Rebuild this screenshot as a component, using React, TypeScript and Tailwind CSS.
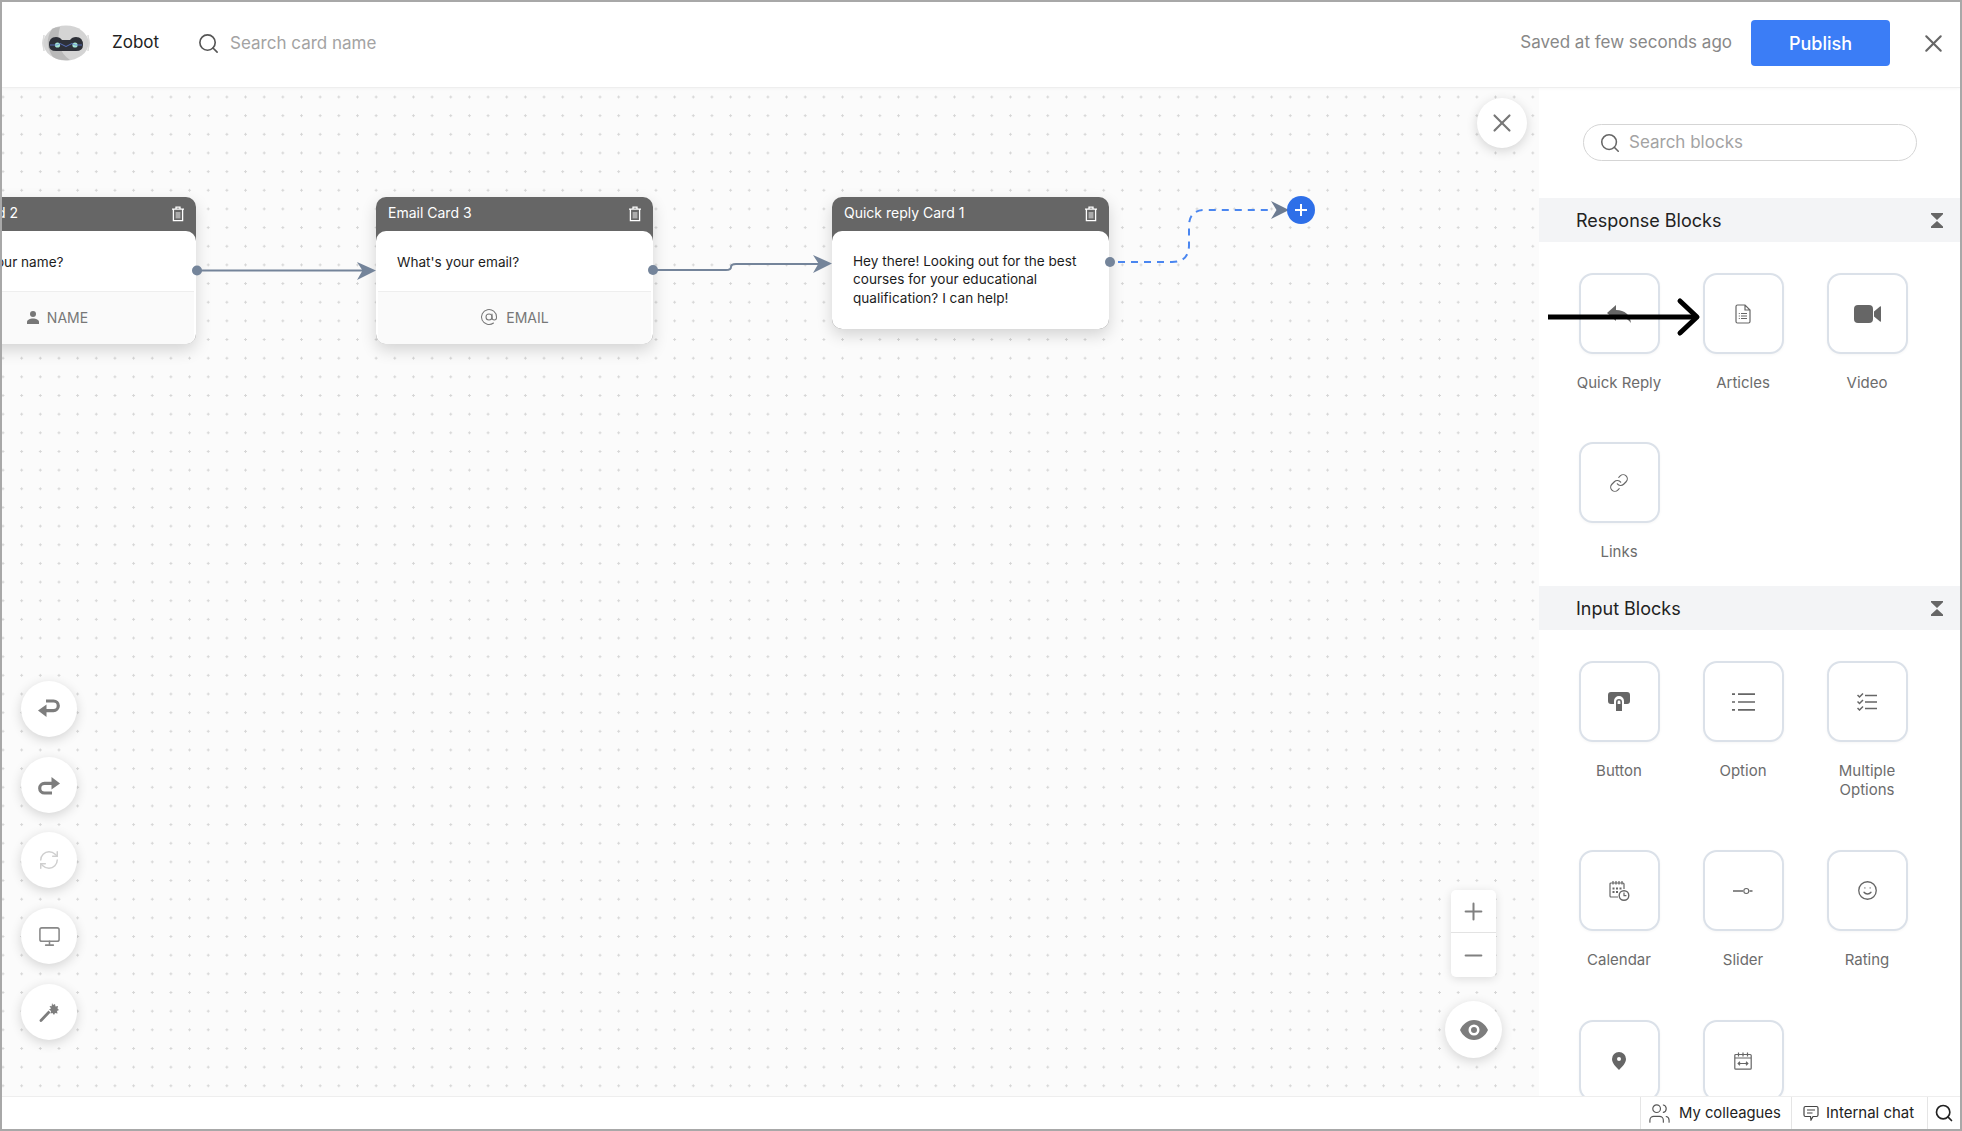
import React from "react";
import { AtSign, Link, Minus, Monitor, Plus, RefreshCw, Search, Smile, Users, X } from "lucide-react";

const font = "font-['Inter','Noto_Sans',sans-serif]";

const TrashIcon = ({ className = "" }: { className?: string }) => (
  <svg viewBox="0 0 14 16" className={className} fill="none" stroke="currentColor" strokeWidth="1.3">
    <path d="M1 3.2h12M5 3V1.2h4V3M2.4 3.4v11.2h9.2V3.4" />
    <rect x="4.6" y="6" width="4.8" height="6.4" fill="currentColor" fillOpacity="0.45" stroke="none" />
  </svg>
);

const CollapseIcon = () => (
  <svg viewBox="0 0 12 15" className="w-3 h-[15px] text-[#666]" fill="currentColor">
    <path d="M0 0h12v1.2L6 7 0 1.2zM6 8l6 5.6V15H0v-1.4z" />
  </svg>
);

const Logo = () => (
  <svg viewBox="0 0 52 36" className="w-[52px] h-9">
    <path d="M4 10 Q1 18 4 26 L4 10zM48 10 Q51 18 48 26 L48 10z" fill="#ddd" stroke="#ddd" />
    <ellipse cx="26" cy="18" rx="22.5" ry="17.5" fill="#d4d4d4" />
    <path d="M12 4 Q3 18 13 32 Q20 36 30 35 Q14 24 20 2 Q15 2 12 4z" fill="#b9b9b9" />
    <path d="M9 20 Q9 12 16 12 Q20 12 22 15 H30 Q32 12 36 12 Q43 12 43 20 Q43 26 36 26 H16 Q9 26 9 20z" fill="#2d3038" />
    <circle cx="17.5" cy="20" r="2.6" fill="#a6e6d2" />
    <circle cx="35" cy="20" r="2.6" fill="#a6e6d2" />
    <path d="M10 20 H17 Q20 17 23 20 T29 20 T35 20 H42" fill="none" stroke="#5f7ed8" strokeWidth="0.8" />
  </svg>
);

const NodeCard = ({ title, left, width, children }: { title: string; left: string; width: string; children: React.ReactNode }) => (
  <div className={`absolute top-[109px] ${left} ${width} rounded-[10px] bg-[#666666] shadow-[0_6px_16px_rgba(0,0,0,0.16)]`}>
    <div className="h-[34px] pb-[3px] flex items-center justify-between pl-3 pr-[11px] text-[14px] text-white">
      <span>{title}</span>
      <TrashIcon className="w-[14px] h-4 text-white mt-[3px]" />
    </div>
    <div className="rounded-[10px] bg-white overflow-hidden">{children}</div>
  </div>
);

const InputCardBody = ({ text, textClass, icon, label }: { text: string; textClass: string; icon: React.ReactNode; label: string }) => (
  <>
    <div className={`h-[60px] pt-[21px] text-[13.6px] leading-[20px] text-[#1c1c1c] ${textClass}`}>{text}</div>
    <div className="h-[53px] pb-[2px] mx-0.5 border-t border-[#eeeeee] bg-[#fafafa] flex items-center justify-center gap-2 text-[14px] text-[#777]">
      {icon}
      <span>{label}</span>
    </div>
  </>
);

const Tile = ({ label, icon }: { label?: string; icon: React.ReactNode }) => (
  <div className="flex flex-col items-center">
    <div className="w-[81px] h-[81px] shrink-0 rounded-[14px] border-2 border-[#dbe1e9] bg-white flex items-center justify-center text-[#666] shadow-[0_1px_3px_rgba(0,0,0,0.04)]">
      {icon}
    </div>
    {label && <div className="mt-[19px] text-center text-[15px] leading-[19px] text-[#6c6c6c] whitespace-pre">{label}</div>}
  </div>
);

const SectionHeader = ({ title }: { title: string }) => (
  <div className="h-11 shrink-0 bg-[#f3f4f6] flex items-center justify-between pl-[37px] pr-[17px] text-[18px] text-[#222]">
    <span>{title}</span>
    <CollapseIcon />
  </div>
);

const ToolButton = ({ children }: { children: React.ReactNode }) => (
  <div className="w-14 h-14 rounded-full bg-white shadow-[0_3px_12px_rgba(0,0,0,0.16)] flex items-center justify-center text-[#7d7d7d]">
    {children}
  </div>
);

const ArticleIcon = () => (
  <svg viewBox="0 0 16 20" className="w-4 h-5" fill="none" stroke="currentColor" strokeWidth="1.2">
    <path d="M1 2.5A1.5 1.5 0 0 1 2.5 1H10l5 5v11.5a1.5 1.5 0 0 1-1.5 1.5h-11A1.5 1.5 0 0 1 1 17.5zM10 1v5h5" />
    <path d="M6 9.5h6M6 12h6M6 14.5h6M3.8 9.5h1M3.8 12h1M3.8 14.5h1" />
  </svg>
);

const VideoIcon = () => (
  <svg viewBox="0 0 27 18" className="w-[27px] h-[18px]" fill="currentColor">
    <rect x="0" y="0" width="19" height="18" rx="4" />
    <path d="M20 6.5 26 1.5c.5-.4 1-.2 1 .5v14c0 .7-.5.9-1 .5l-6-5z" />
  </svg>
);

const ReplyIcon = () => (
  <svg viewBox="0 0 24 18" className="w-6 h-[18px]" fill="currentColor">
    <path d="M9 0 0 8l9 8v-5c6 0 11 2 15 7-1-8-6-13-15-13z" />
  </svg>
);

const ButtonIcon = () => (
  <svg viewBox="0 0 22 19" className="w-[22px] h-[19px]" fill="currentColor">
    <path d="M3 0h16a3 3 0 0 1 3 3v6a3 3 0 0 1-3 3h-3V9a5 5 0 0 0-10 0v3H3a3 3 0 0 1-3-3V3a3 3 0 0 1 3-3z" />
    <path d="M8 10a3 3 0 0 1 6 0v9H8zM11 8.500a1.400 1.400 0 0 0-1.400 1.400V12h2.800V9.900A1.400 1.400 0 0 0 11 8.500z" fillRule="evenodd" />
  </svg>
);

const OptionIcon = () => (
  <svg viewBox="0 0 23 18" className="w-[23px] h-[18px]" fill="none" stroke="currentColor" strokeWidth="1.7">
    <path d="M6 1.200h17M6 9h17M6 16.800h17" />
    <path d="M0 1.200h3M0 9h3M0 16.800h3" />
  </svg>
);

const MultiOptionIcon = () => (
  <svg viewBox="0 0 20 18" className="w-5 h-[18px]" fill="none" stroke="currentColor" strokeWidth="1.500">
    <path d="M8 2.500h12M8 9h12M8 15.500h12" />
    <path d="M0.500 2 2.500 4 6 0.500M0.500 8.500 2.500 10.500 6 7M0.500 15 2.500 17 6 13.500" />
  </svg>
);

const CalendarClockIcon = () => (
  <svg viewBox="0 0 21 20" className="w-[21px] h-5" fill="none" stroke="currentColor" strokeWidth="1.2">
    <path d="M9 16H2a1 1 0 0 1-1-1V3a1 1 0 0 1 1-1h12a1 1 0 0 1 1 1v5" />
    <path d="M4 0v3.500M7 0v3.500M10 0v3.500M13 0v3.500" />
    <path d="M3.500 6.500h2v2h-2zM7 6.500h2v2H7zM10.500 6.500h2v2h-2zM3.500 10h2v2h-2zM7 10h2v2H7z" fill="currentColor" stroke="none" />
    <circle cx="15" cy="14.500" r="4.800" fill="#fff" strokeWidth="1.400" />
    <path d="M15 11.500v3.200h2.400" />
  </svg>
);

const SliderIcon = () => (
  <svg viewBox="0 0 20 8" className="w-5 h-2" fill="none" stroke="currentColor" strokeWidth="1.100">
    <path d="M0 4h10M16.500 4h3" strokeWidth="1.400" />
    <circle cx="13.300" cy="4" r="2.500" />
  </svg>
);

const PinIcon = () => (
  <svg viewBox="0 0 14 18" className="w-[14px] h-[18px]" fill="currentColor">
    <path fillRule="evenodd" d="M7 0a7 7 0 0 1 7 7c0 4-4 8-7 11C4 15 0 11 0 7a7 7 0 0 1 7-7zm0 5a2 2 0 1 0 0 4 2 2 0 0 0 0-4z" />
  </svg>
);

const DateRangeIcon = () => (
  <svg viewBox="0 0 18 18" className="w-[18px] h-[18px]" fill="none" stroke="currentColor" strokeWidth="1.200">
    <rect x="0.800" y="2.500" width="16.400" height="14.700" rx="1" />
    <path d="M4.500 0.500v4M9 0.500v4M13.500 0.500v4M1 6h16M4.500 11.500h9" />
    <path d="M6 9.800 4.200 11.500 6 13.200M12 9.800l1.800 1.700-1.800 1.700" />
  </svg>
);

const UndoIcon = () => (
  <svg viewBox="0 0 22 20" className="w-[22px] h-5" fill="none" stroke="currentColor" strokeWidth="3.200">
    <path d="M8 2h7.500a4.800 4.800 0 0 1 0 9.600H7" />
    <path d="M8.500 5.500 0 11.500l8.500 6.500z" fill="currentColor" stroke="none" />
  </svg>
);

const RedoIcon = () => (
  <svg viewBox="0 0 22 20" className="w-[22px] h-5" fill="none" stroke="currentColor" strokeWidth="3.200">
    <path d="M14 18H6.500a4.800 4.800 0 0 1 0-9.600H15" />
    <path d="M13.500 2 22 8.500 13.500 14.500z" fill="currentColor" stroke="none" />
  </svg>
);

const WandIcon = () => (
  <svg viewBox="0 0 20 20" className="w-5 h-5" fill="currentColor">
    <path d="M9.500 8.500 11.500 10.500 3 19.500a1.300 1.300 0 0 1-2-2z" />
    <path d="M13 1l1 2 2-1 .5 2.500 2.500-.5-.5 2.500 1.500 1.500-2 1 .5 2.500-2.500-.5-1 2-1.500-2-2 .5.500-2.500-2-1.500 2-1L10.500 4l2.200.3z" />
  </svg>
);

const Edges = () => (
  <svg className="absolute left-0 top-0 w-full h-full pointer-events-none">
    <g transform="translate(-2,-88)" fill="none">
      <path d="M197 270.500H370" stroke="#74849a" strokeWidth="2" />
      <circle cx="197" cy="270.500" r="5" fill="#74849a" />
      <path d="M376 270.500 357 262 362.500 270.500 357 280z" fill="#74849a" />

      <path d="M653 270H726Q731 270 731 267Q731 264 736 264H825" stroke="#74849a" strokeWidth="2" />
      <circle cx="653" cy="270" r="5" fill="#74849a" />
      <path d="M832 263.500 813 255 818.500 263.500 813 273z" fill="#74849a" />

      <path d="M1118 262H1172Q1189 262 1189 245V226Q1189 210 1205 210H1272" stroke="#4a86f0" strokeWidth="2" strokeDasharray="7 6" />
      <circle cx="1110" cy="262" r="5" fill="#74849a" />
      <path d="M1289 210 1271 201 1276.500 210 1271 219z" fill="#6d7c92" />
      <circle cx="1301" cy="210" r="14" fill="#2e6fe8" />
      <path d="M1295 210H1307M1301 204V216" stroke="#fff" strokeWidth="2" />
    </g>
  </svg>
);

const App = () => {
  return (
    <div className={`relative w-screen h-screen overflow-hidden border-2 border-[#a8a8a8] bg-white flex flex-col ${font}`}>
      <header className="h-[86px] pb-[3px] shrink-0 z-10 bg-white border-b border-[#eeeeee] shadow-[0_1px_3px_rgba(0,0,0,0.03)] flex items-center pl-[38px] pr-3">
        <Logo />
        <span className="ml-5 text-[17px] text-[#222]">Zobot</span>
        <Search className="ml-[38px] w-[23px] h-[23px] text-[#555]" strokeWidth={1.7} />
        <span className="ml-[10px] mt-[2px] text-[17px] text-[#a3a3a3]">Search card name</span>
        <span className="ml-auto text-[17px] text-[#888]">Saved at few seconds ago</span>
        <button className="ml-[19px] w-[139px] h-[46px] rounded-[4px] bg-[#3b7df6] text-white text-[18px] font-medium">Publish</button>
        <X className="ml-[29px] w-[29px] h-[29px] text-[#666]" strokeWidth={1.7} />
      </header>

      <div className="flex-1 min-h-0 flex">
        <main className="relative flex-1 overflow-hidden bg-[#fbfbfb] bg-[radial-gradient(#d6d6d6_1px,transparent_1.2px)] bg-[size:18.67px_18.67px] bg-[position:-8.33px_-0.33px]">
          <NodeCard title="Name Card 2" left="left-[-83px]" width="w-[277px]">
            <InputCardBody
              text="What's your name?"
              textClass="pl-[21px]"
              label="NAME"
              icon={
                <svg viewBox="0 0 12 13" className="w-3 h-[13px] text-[#777]" fill="currentColor">
                  <circle cx="6" cy="3" r="3" />
                  <path d="M0 13v-2c0-2 3-3.500 6-3.500s6 1.500 6 3.500v2z" />
                </svg>
              }
            />
          </NodeCard>

          <NodeCard title="Email Card 3" left="left-[374px]" width="w-[277px]">
            <InputCardBody text="What's your email?" textClass="pl-[21px]" label="EMAIL" icon={<AtSign className="w-[18px] h-[18px] text-[#777]" strokeWidth={1.4} />} />
          </NodeCard>

          <NodeCard title="Quick reply Card 1" left="left-[830px]" width="w-[277px]">
            <div className="h-[98px] pl-[21px] pr-4 pt-[21px] text-[13.6px] leading-[18.3px] text-[#1c1c1c]">
              Hey there! Looking out for the best courses for your educational qualification? I can help!
            </div>
          </NodeCard>

          <Edges />

          <div className="absolute left-[1475px] top-[10px] w-[50px] h-[50px] rounded-full bg-white shadow-[0_3px_12px_rgba(0,0,0,0.16)] flex items-center justify-center">
            <X className="w-[30px] h-[30px] text-[#777]" strokeWidth={1.7} />
          </div>

          <div className="absolute left-[19px] top-[593px] flex flex-col gap-[19.7px]">
            <ToolButton><UndoIcon /></ToolButton>
            <ToolButton><RedoIcon /></ToolButton>
            <ToolButton><RefreshCw className="w-[22px] h-[22px] text-[#cfcfcf]" strokeWidth={1.6} /></ToolButton>
            <ToolButton><Monitor className="w-[23px] h-[23px] text-[#888]" strokeWidth={1.6} /></ToolButton>
            <ToolButton><WandIcon /></ToolButton>
          </div>

          <div className="absolute left-[1449px] top-[802px] w-[45px] rounded-[5px] bg-white shadow-[0_2px_10px_rgba(0,0,0,0.12)] flex flex-col text-[#808080]">
            <div className="h-[43px] flex items-center justify-center border-b border-[#e3e3e3]">
              <Plus className="w-[27px] h-[27px]" strokeWidth={1.8} />
            </div>
            <div className="h-[44px] flex items-center justify-center">
              <Minus className="w-[27px] h-[27px]" strokeWidth={1.8} />
            </div>
          </div>

          <div className="absolute left-[1443px] top-[913px] w-[57px] h-[57px] rounded-full bg-white shadow-[0_3px_12px_rgba(0,0,0,0.16)] flex items-center justify-center">
            <svg viewBox="0 0 28 20" className="w-7 h-5 text-[#7d7d7d]" fill="currentColor">
              <path fillRule="evenodd" d="M14 0c6.500 0 11.500 4.500 14 10-2.500 5.500-7.500 10-14 10S2.500 15.500 0 10C2.500 4.500 7.500 0 14 0zm0 4.500a5.500 5.500 0 1 0 0 11 5.500 5.500 0 0 0 0-11zm0 2.500a3 3 0 1 1 0 6 3 3 0 0 1 0-6z" />
            </svg>
          </div>
        </main>

        <aside className="w-[421px] shrink-0 bg-white overflow-hidden flex flex-col">
          <div className="pt-9 pb-[37px] pl-11 pr-[43px] shrink-0">
            <div className="h-[37px] rounded-full border border-[#d5d5d5] flex items-center pl-[15px] gap-2">
              <Search className="w-[22px] h-[22px] text-[#666]" strokeWidth={1.7} />
              <span className="text-[17px] text-[#a3a3a3]">Search blocks</span>
            </div>
          </div>

          <SectionHeader title="Response Blocks" />
          <div className="shrink-0 grid grid-cols-[124px_124px_124px] gap-y-[50px] pl-[18px] pt-[31px] pb-[25px]">
            <Tile label="Quick Reply" icon={<ReplyIcon />} />
            <Tile label="Articles" icon={<ArticleIcon />} />
            <Tile label="Video" icon={<VideoIcon />} />
            <Tile label="Links" icon={<Link className="w-5 h-5" strokeWidth={1.4} />} />
          </div>

          <SectionHeader title="Input Blocks" />
          <div className="shrink-0 grid grid-cols-[124px_124px_124px] gap-y-[51px] pl-[18px] pt-[31px]">
            <Tile label="Button" icon={<ButtonIcon />} />
            <Tile label="Option" icon={<OptionIcon />} />
            <Tile label={"Multiple\nOptions"} icon={<MultiOptionIcon />} />
            <Tile label="Calendar" icon={<CalendarClockIcon />} />
            <Tile label="Slider" icon={<SliderIcon />} />
            <Tile label="Rating" icon={<Smile className="w-[21px] h-[21px]" strokeWidth={1.5} />} />
            <Tile icon={<PinIcon />} />
            <Tile icon={<DateRangeIcon />} />
          </div>
        </aside>
      </div>

      <footer className="h-[33px] shrink-0 z-10 bg-white border-t border-[#eeeeee] flex justify-end text-[14.8px] text-[#222]">
        <div className="w-[151px] border-l border-[#e5e5e5] flex items-center pl-[7px] gap-2">
          <Users className="w-[23px] h-[23px] text-[#555]" strokeWidth={1.2} />
          <span>My colleagues</span>
        </div>
        <div className="w-[136px] border-l border-[#e5e5e5] flex items-center pl-[11px] gap-[7px]">
          <svg viewBox="0 0 16 16" className="w-4 h-4 text-[#444]" fill="none" stroke="currentColor" strokeWidth="1.200">
            <path d="M2.500 1.500h11a1.500 1.500 0 0 1 1.500 1.500v7a1.500 1.500 0 0 1-1.500 1.500H10L8 15l-.5-3.500h-5A1.500 1.500 0 0 1 1 10V3a1.500 1.500 0 0 1 1.500-1.500zM4 5h8M4 8h5.500" />
          </svg>
          <span className="text-[15px]">Internal chat</span>
        </div>
        <div className="w-[33px] border-l border-[#e5e5e5] flex items-center justify-center">
          <Search className="w-5 h-5 text-[#222]" strokeWidth={2} />
        </div>
      </footer>

      {/* annotation arrow drawn over the panel */}
      <svg className="absolute left-[1544px] top-[295px] w-[156px] h-[44px] pointer-events-none" viewBox="0 0 156 44" fill="none" stroke="#000" strokeWidth="5">
        <path d="M2 20H150" />
        <path d="M134 4 151 20 134 36" strokeLinecap="round" strokeLinejoin="round" />
      </svg>
    </div>
  );
};

export default App;
